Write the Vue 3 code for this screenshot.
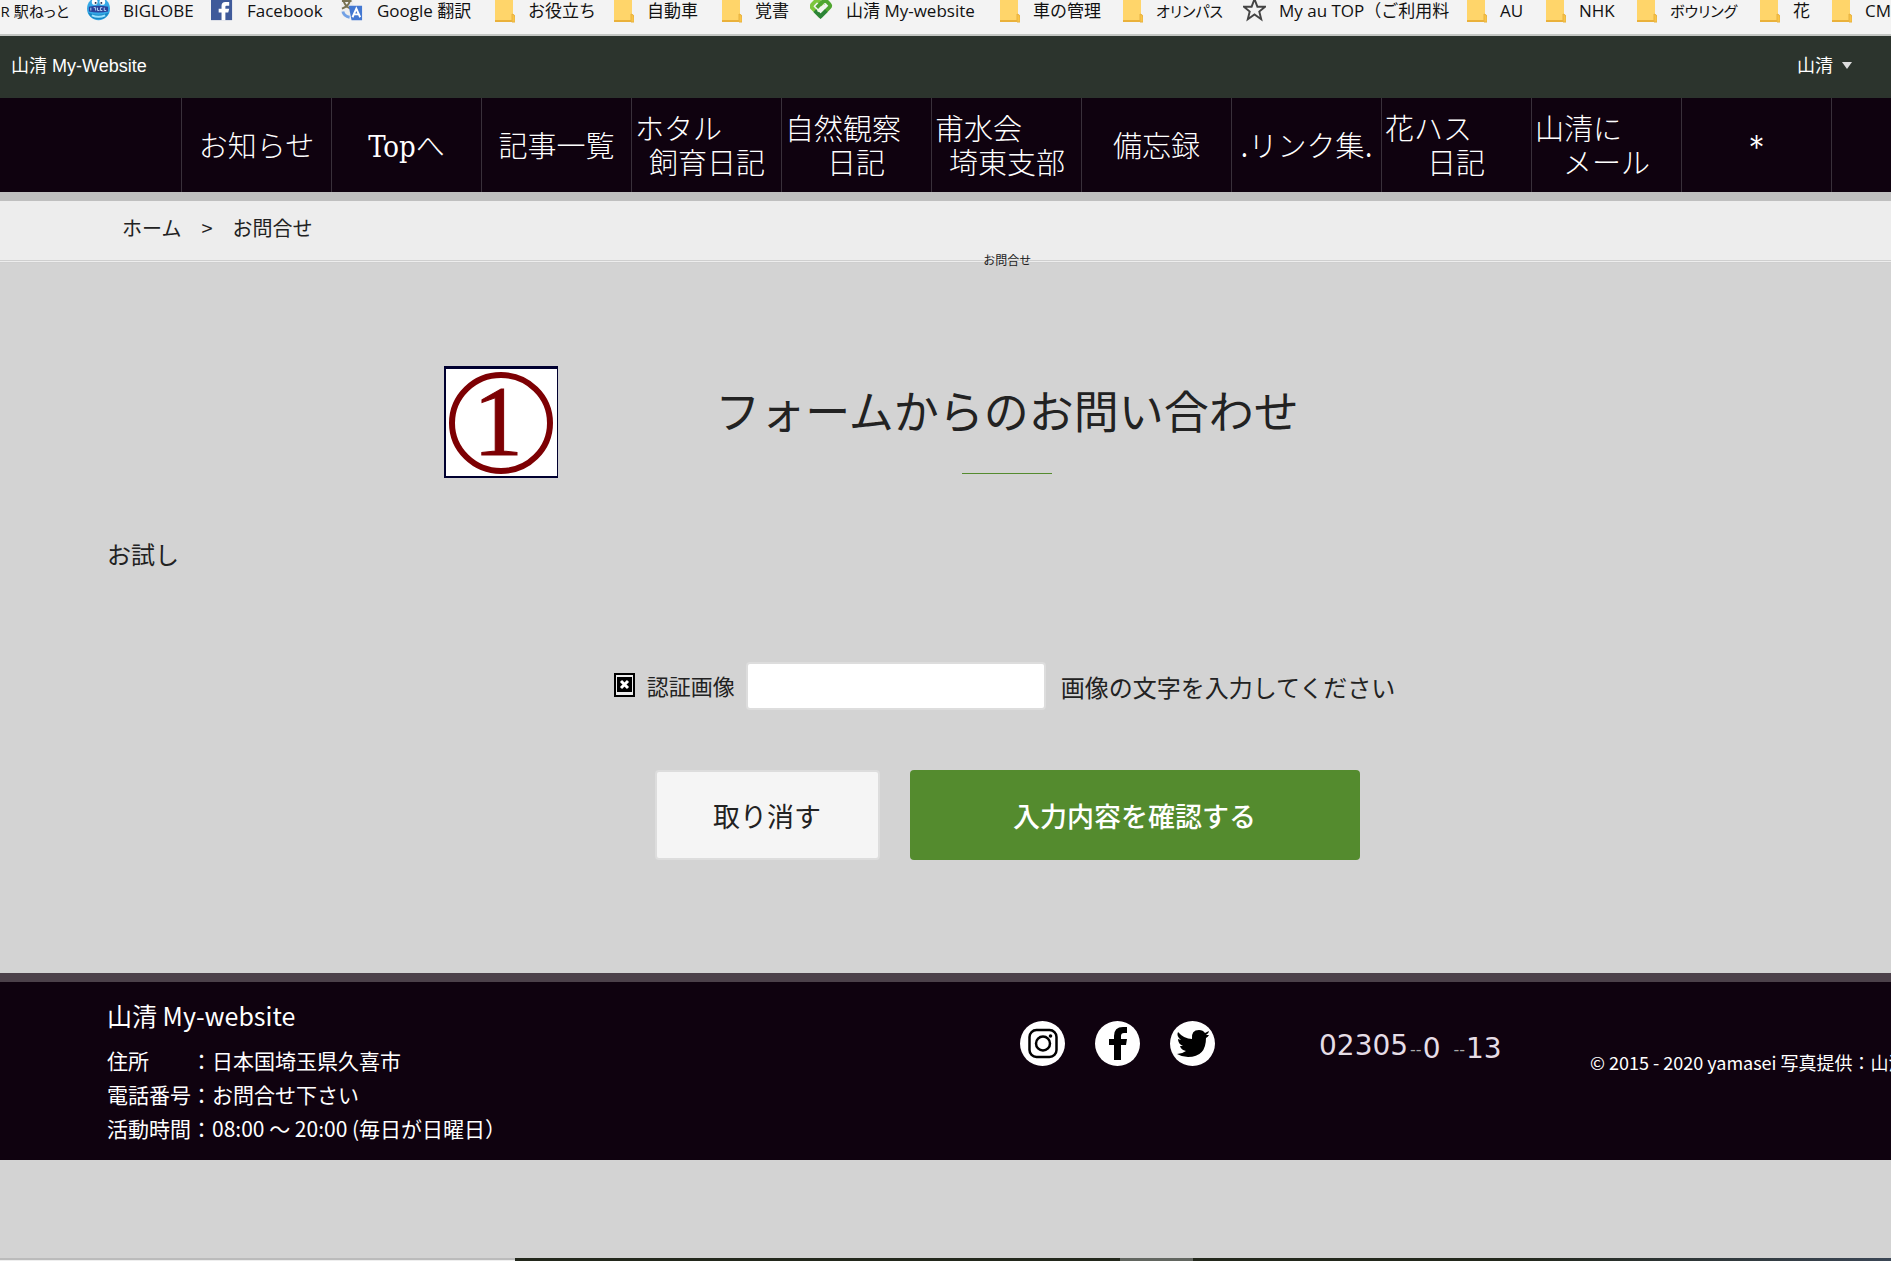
<script setup>
import { ref } from 'vue'

const bookmarks = [
  { icon: 'none', label: 'R 駅ねっと', width: 87, tight: true },
  { icon: 'biglobe', label: 'BIGLOBE', width: 124 },
  { icon: 'facebook', label: 'Facebook', width: 130 },
  { icon: 'translate', label: 'Google 翻訳', width: 154 },
  { icon: 'folder', label: 'お役立ち', width: 119 },
  { icon: 'folder', label: '自動車', width: 108 },
  { icon: 'folder', label: '覚書', width: 88 },
  { icon: 'heart', label: '山清 My-website', width: 190 },
  { icon: 'folder', label: '車の管理', width: 123 },
  { icon: 'folder', label: 'オリンパス', width: 120, tight: true },
  { icon: 'star', label: 'My au TOP（ご利用料', width: 224 },
  { icon: 'folder', label: 'AU', width: 79 },
  { icon: 'folder', label: 'NHK', width: 91 },
  { icon: 'folder', label: 'ボウリング', width: 123, tight: true },
  { icon: 'folder', label: '花', width: 72 },
  { icon: 'folder', label: 'CM', width: 80 },
]

const menu = [
  { lines: ['お知らせ'] },
  { lines: ['Topへ'] },
  { lines: ['記事一覧'] },
  { lines: ['ホタル', '飼育日記'], indent: 'narrow' },
  { lines: ['自然観察', '日記'], indent: 'wide' },
  { lines: ['甫水会', '埼東支部'], indent: 'narrow' },
  { lines: ['備忘録'] },
  { lines: ['.リンク集.'] },
  { lines: ['花ハス', '日記'], indent: 'wide' },
  { lines: ['山清に', 'メール'], indent: 'medium' },
  { lines: ['*'] },
]

const captcha = ref('')
</script>

<template>
  <div class="page">
    <nav class="bookmarks" aria-label="ブックマーク">
      <a v-for="b in bookmarks" :key="b.label" href="#" class="bookmark" :style="{ width: b.width + 'px' }">
        <svg v-if="b.icon === 'folder'" class="bm-icon folder" viewBox="0 0 20 24">
          <path d="M0-2H18V15L20 17V22H0Z" fill="#ffd56a" />
          <path d="M0 21H20" stroke="#eab13a" stroke-width="2" />
          <path d="M17 22V14Q20 14 20 18V22Z" fill="#f9c447" stroke="#e8b241" />
        </svg>
        <svg v-else-if="b.icon === 'biglobe'" class="bm-icon" viewBox="0 0 24 24">
          <circle cx="12" cy="9" r="12" fill="#35a8e6" />
          <path d="M1 13Q12 18 23 13A12 12 0 0 1 1 13Z" fill="#1687c4" />
          <path d="M5 16Q12 19 19 16" stroke="#9ce3ff" stroke-width="2" fill="none" />
          <ellipse cx="8" cy="2" rx="3" ry="3" fill="#fff" /><ellipse cx="16" cy="2" rx="3" ry="3" fill="#fff" />
          <circle cx="9" cy="3" r="1" fill="#124" /><circle cx="15" cy="3" r="1" fill="#124" />
          <path d="M2 7Q12 5 22 7V12Q12 14 2 12Z" fill="#2b429b" />
          <path d="M4 8V11M7 8H9V11M11 8V11H13M16 8H14V11H16M18 8V11H20" stroke="#b8d8f5" fill="none" />
        </svg>
        <svg v-else-if="b.icon === 'facebook'" class="bm-icon" viewBox="0 0 24 24">
          <rect y="-2" width="22" height="23" fill="#3f5a9a" />
          <path d="M11 21V13H8V9H11V6Q11 2 15 2H19V6H16Q15 6 15 7V9H19L18 13H15V21Z" fill="#fff" />
        </svg>
        <svg v-else-if="b.icon === 'translate'" class="bm-icon" viewBox="0 0 24 24">
          <path d="M0-2H12L15 18H3L0 14Z" fill="#eee" />
          <path d="M1 1H11M6-2V1M3 2Q5 7 10 9M9 2Q7 7 1 9" stroke="#777151" stroke-width="2" fill="none" />
          <path d="M8 6H22V21H11Z" fill="#4378d2" /><path d="M2 12Q3 17 9 18" stroke="#72a1e5" stroke-width="3" fill="none" />
          <path d="M12 18L16 9L20 18M14 15H18" stroke="#fff" stroke-width="2" fill="none" />
        </svg>
        <svg v-else-if="b.icon === 'heart'" class="bm-icon" viewBox="0 0 24 24">
          <path d="M11 17L2 8Q1 6 3 4L6 1Q8 0 10 2L14 6" fill="none" stroke="#7cc63c" stroke-width="4" stroke-linejoin="round" />
          <path d="M7 8L13 2Q16 0 18 2L20 4Q22 6 20 8L11 17L6 12" fill="none" stroke="#4fa52f" stroke-width="4" stroke-linejoin="round" />
          <path d="M5 11L11 17L17 11" fill="none" stroke="#2c8437" stroke-width="4" />
          <path d="M8 12L15 5" stroke="#eef7e6" stroke-width="2" />
        </svg>
        <svg v-else-if="b.icon === 'star'" class="bm-icon" viewBox="0 0 24 24">
          <path d="M12-1L15 7H23L17 12L19 20L12 15L5 20L7 12L1 7H9Z" fill="none" stroke="#444" stroke-width="2" />
        </svg>
        <span class="bm-label" :class="{ tight: b.tight }">{{ b.label }}</span>
      </a>
    </nav>

    <header class="site-bar">
      <a href="#" class="brand">山清 My-Website</a>
      <button type="button" class="user-menu">
        山清
        <svg width="10" height="8" viewBox="0 0 10 8"><path d="M0 0H10L5 7Z" fill="#ddd" /></svg>
      </button>
    </header>

    <nav class="menu" aria-label="メニュー">
      <a v-for="(m, i) in menu" :key="i" href="#" class="menu-item" :class="{ stacked: m.lines.length > 1 }">
        <span v-for="(l, j) in m.lines" :key="j" :class="j ? m.indent : ''">{{ l }}</span>
      </a>
      <span class="menu-end"></span>
    </nav>

    <div class="crumbs">
      <a href="#">ホーム</a><span>&gt;</span><span>お問合せ</span>
      <h1 class="page-name">お問合せ</h1>
    </div>

    <main class="content">
      <div class="intro">
        <svg class="badge" viewBox="0 0 114 112" role="img" aria-label="1">
          <rect width="114" height="112" fill="#000030" />
          <rect x="2" y="3" width="111" height="107" fill="#fff" />
          <ellipse cx="57" cy="57" rx="49" ry="48" fill="none" stroke="#7d0003" stroke-width="6" />
          <text x="54" y="89" text-anchor="middle" class="badge-digit">1</text>
        </svg>
        <h2>フォームからのお問い合わせ</h2>
      </div>
      <p class="trial">お試し</p>
      <form @submit.prevent>
        <div class="captcha">
          <label for="captcha">
            <svg width="21" height="24" viewBox="0 0 21 24">
              <rect x="1" y="1" width="19" height="22" fill="#eee" stroke="#000" stroke-width="2" />
              <rect x="3" y="4" width="15" height="15" fill="#000" />
              <path d="M7 8L14 15M14 8L7 15" stroke="#fff" stroke-width="3" />
            </svg>
            認証画像
          </label>
          <input id="captcha" v-model="captcha" type="text" />
          <span class="hint">画像の文字を入力してください</span>
        </div>
        <div class="actions">
          <button type="reset" class="cancel">取り消す</button>
          <button type="submit" class="confirm">入力内容を確認する</button>
        </div>
      </form>
    </main>

    <footer class="footer">
      <div class="about">
        <h3>山清 My-website</h3>
        <p>住所　　：日本国埼玉県久喜市</p>
        <p>電話番号：お問合せ下さい</p>
        <p>活動時間：08:00 ～ 20:00 (毎日が日曜日）</p>
      </div>
      <div class="social">
        <a href="#" aria-label="Instagram">
          <svg viewBox="0 0 45 45"><circle cx="22.5" cy="22.5" r="22.5" fill="#fff" />
            <g fill="none" stroke="#000" stroke-width="2.5"><rect x="9.5" y="9" width="27" height="27" rx="7" /><circle cx="23" cy="22.5" r="7" /></g>
            <circle cx="30.5" cy="15" r="1.8" />
          </svg>
        </a>
        <a href="#" aria-label="Facebook">
          <svg viewBox="0 0 45 45"><circle cx="22.5" cy="22.5" r="22.5" fill="#fff" />
            <path d="M19 39V24H14V18H19V15Q19 6 28 6H32V12H29Q26 12 26 15V18H32L31 24H26V39Z" />
          </svg>
        </a>
        <a href="#" aria-label="Twitter">
          <svg viewBox="0 0 45 45"><circle cx="22.5" cy="22.5" r="22.5" fill="#fff" />
            <path d="M8 11Q14 18 22 18Q21 9 29 9Q33 9 35 12L39 10Q39 12 36 14L39 14Q38 16 36 17Q36 36 18 36Q12 36 7 33Q12 33 16 30Q11 29 10 25H13Q8 23 8 18L11 19Q6 15 8 11Z" />
          </svg>
        </a>
      </div>
      <div class="counter"><span>02305</span><small>--</small><span class="low">0</span><small class="gap">--</small><span class="low">13</span></div>
      <p class="copyright">© 2015 - 2020 yamasei 写真提供：山清</p>
    </footer>

    <div class="taskbar"><span class="task-field"></span><span class="task-active"></span></div>
  </div>
</template>

<style>
body { margin: 0; }
</style>

<style scoped>
.page {
  display: flex;
  flex-direction: column;
  min-height: 100vh;
  overflow: hidden;
  background: #d3d3d3;
  color: #222;
  font-family: "Noto Sans CJK JP", sans-serif;
}
a { color: inherit; text-decoration: none; }
h1, h2, h3, p { margin: 0; font-weight: 400; }
button { font-family: inherit; cursor: pointer; }

.bookmarks {
  display: flex;
  height: 34px;
  border-bottom: 2px solid #c3c6c3;
  background: #f3f3f3;
  color: #111;
  overflow: hidden;
}
.bookmark {
  display: flex;
  flex: none;
  gap: 13px;
  align-items: flex-start;
}
.bookmark:first-child { box-sizing: border-box; justify-content: flex-end; padding-right: 18px; }
.bm-icon { flex: none; width: 23px; height: 23px; }
.bm-icon.folder { width: 20px; height: 24px; }
.bm-label { font: 17px/22px "Open Sans", "Noto Sans CJK JP", sans-serif; white-space: nowrap; }
.tight { font-size: 15px; font-feature-settings: "palt"; }

.site-bar {
  box-sizing: border-box;
  display: flex;
  justify-content: space-between;
  align-items: center;
  height: 62px;
  padding: 0 39px 2px 11px;
  background: #2c342d;
  color: #fff;
  font: 18px/24px "Liberation Sans", "Noto Sans CJK JP", sans-serif;
}
.user-menu {
  display: flex;
  align-items: center;
  gap: 9px;
  padding: 0;
  border: 0;
  background: none;
  color: inherit;
  font: inherit;
}

.menu {
  display: flex;
  height: 94px;
  padding-left: 181px;
  border-bottom: 9px solid #bfbfbf;
  background: #0f020f;
  color: #fff;
  font: 300 29px/34px "DejaVu Serif Condensed", "DejaVu Serif", "Noto Sans CJK JP", serif;
}
.menu-item {
  box-sizing: border-box;
  display: flex;
  flex: none;
  flex-direction: column;
  justify-content: center;
  align-items: center;
  width: 150px;
  padding-top: 3px;
  border-left: 1px solid #39303a;
  white-space: nowrap;
}
.stacked { align-items: flex-start; padding-left: 3px; }
.narrow { padding-left: 14px; }
.medium { padding-left: 28px; }
.wide { padding-left: 42px; }
.menu-end { border-left: 1px solid #39303a; }

.crumbs {
  position: relative;
  display: flex;
  gap: 20px;
  height: 59px;
  padding-left: 122px;
  border-bottom: 3px double #cfcfcf;
  background: #ededed;
  font-size: 20px;
  line-height: 54px;
}
.page-name {
  position: absolute;
  left: 52%;
  bottom: -8px;
  font-size: 12px;
  line-height: 16px;
}

/* The main column is centred on a canvas a little wider than the window. */
.content {
  margin-right: -123px;
  padding: 103px 107px 113px;
}
.intro {
  display: grid;
  grid-template-columns: 1fr auto 1fr;
}
.badge { width: 114px; height: 112px; margin-left: 337px; }
.badge-digit { font: 100px "Liberation Serif", serif; fill: #7d0003; stroke: #7d0003; stroke-width: 1; }
h2 {
  display: flex;
  flex-direction: column;
  align-items: center;
  gap: 30px;
  padding-top: 10px;
  font-size: 45px;
  line-height: 67px;
}
h2::after { content: ""; width: 90px; height: 1px; background: #548b2e; }
.trial { margin-top: 58px; font-size: 24px; line-height: 36px; }
.captcha {
  display: flex;
  justify-content: center;
  align-items: center;
  margin-top: 90px;
  padding-right: 5px;
  font-size: 24px;
}
.captcha label { display: flex; align-items: center; gap: 12px; padding-bottom: 3px; font-size: 22px; line-height: 32px; }
.captcha input {
  box-sizing: border-box;
  width: 300px;
  height: 48px;
  margin: 0 15px 0 11px;
  padding: 0 12px;
  border: 2px solid #ddd;
  border-radius: 4px;
  background: #fff;
  font: inherit;
}
.actions { display: flex; justify-content: center; gap: 30px; margin-top: 60px; }
.actions button {
  height: 90px;
  border: 0;
  border-radius: 4px;
  font-size: 27px;
}
.actions .cancel { width: 225px; border: 2px solid #ddd; background: #f5f5f5; color: #222; }
.actions .confirm { width: 450px; background: #548b2e; color: #fff; font-weight: 500; }

.footer {
  box-sizing: border-box;
  display: flex;
  height: 187px;
  padding-left: 107px;
  border-top: 9px solid #4c414a;
  background: #0f020f;
  color: #fff;
  white-space: nowrap;
}
.about { flex: none; width: 913px; padding-top: 13px; font-size: 21px; line-height: 34px; }
.about h3 { margin-bottom: 8px; font-size: 25px; line-height: 40px; }
.social { display: flex; flex: none; gap: 30px; padding-top: 39px; }
.social a, .social svg { display: block; width: 45px; height: 45px; }
.counter {
  display: flex;
  flex: none;
  width: 271px;
  margin-left: 104px;
  padding-top: 48px;
  color: #e6dde6;
  font: 28px/32px "DejaVu Sans", sans-serif;
}
.counter small { padding: 8px 1px 0 2px; color: #aaa; font-size: 16px; line-height: 24px; }
.counter .gap { padding-left: 13px; }
.counter .low { padding-top: 3px; }
.copyright { padding-top: 67px; font-size: 18px; line-height: 27px; }

.taskbar {
  display: flex;
  height: 3px;
  margin-top: auto;
  background: linear-gradient(90deg, #23281c 80%, #3b4655);
}
.task-field { box-sizing: border-box; width: 515px; margin-right: 605px; border-top: 2px solid #bbb; background: #eee; }
.task-active { width: 73px; background: #626660; }
</style>
